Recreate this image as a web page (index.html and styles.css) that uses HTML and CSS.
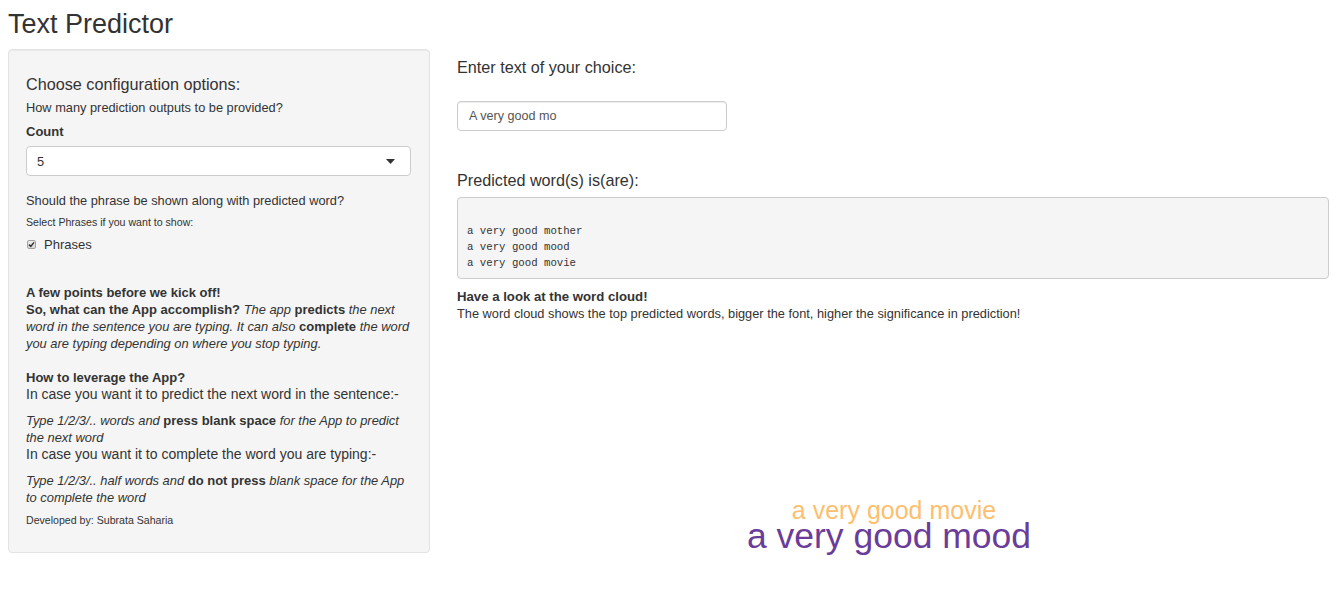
FILE: index.html
```html
<!DOCTYPE html>
<html>
<head>
<meta charset="utf-8">
<title>Text Predictor</title>
<link rel="stylesheet" href="styles.css">
</head>
<body>
<div class="page">
  <h2 class="title">Text Predictor</h2>
  <div class="row">
    <aside class="well">
      <h4 class="cfg-title">Choose configuration options:</h4>
      <p class="hint">How many prediction outputs to be provided?</p>
      <label class="ctrl-label">Count</label>
      <div class="select">
        <span>5</span>
        <svg class="caret" width="9" height="5" viewBox="0 0 9 5"><path d="M0 0 H9 L4.5 5 Z" fill="#333"/></svg>
      </div>
      <p class="question">Should the phrase be shown along with predicted word?</p>
      <p class="small">Select Phrases if you want to show:</p>
      <div class="check-row">
        <span class="checkbox"><svg width="7" height="7" viewBox="0 0 7 7"><path d="M1 3.6 L2.8 5.4 L6 1.4" stroke="#333" stroke-width="1.5" fill="none"/></svg></span>
        <span class="check-label">Phrases</span>
      </div>
      <p class="block first-block"><b>A few points before we kick off!</b><br><b>So, what can the App accomplish?</b> <i>The app</i> <b>predicts</b> <i>the next word in the sentence you are typing. It can also</i> <b>complete</b> <i>the word you are typing depending on where you stop typing.</i></p>
      <p class="block lev"><b>How to leverage the App?</b><br><span class="plain">In case you want it to predict the next word in the sentence:-</span></p>
      <p class="block step"><i>Type 1/2/3/.. words and</i> <b>press blank space</b> <i>for the App to predict the next word</i><br><span class="plain">In case you want it to complete the word you are typing:-</span></p>
      <p class="block step"><i>Type 1/2/3/.. half words and</i> <b>do not press</b> <i>blank space for the App to complete the word</i></p>
      <p class="small dev">Developed by: Subrata Saharia</p>
    </aside>
    <main class="main">
      <h4 class="m-label">Enter text of your choice:</h4>
      <div class="input">A very good mo</div>
      <h4 class="m-label pred">Predicted word(s) is(are):</h4>
      <pre class="out">

a very good mother
a very good mood
a very good movie</pre>
      <p class="cloud-text"><b>Have a look at the word cloud!</b><br>The word cloud shows the top predicted words, bigger the font, higher the significance in prediction!</p>
      <div class="cloud">
        <span class="w-movie">a very good movie</span>
        <span class="w-mood">a very good mood</span>
      </div>
    </main>
  </div>
</div>
</body>
</html>
```

FILE: styles.css
```css
* { box-sizing: border-box; }
html, body { margin: 0; padding: 0; background: #fff; }
body {
  font-family: "Liberation Sans", Arial, sans-serif;
  color: #333;
  font-size: 12.8px;
  line-height: 17px;
}
.page { padding: 0 14px 0 8px; }
.title {
  font-weight: 400;
  font-size: 27px;
  line-height: 30px;
  margin: 9px 0 10px;
  color: #333;
}
.row { display: flex; align-items: flex-start; }
.well {
  width: 422px;
  flex: none;
  background: #f5f5f5;
  border: 1px solid #e3e3e3;
  border-radius: 4px;
  box-shadow: inset 0 1px 1px rgba(0,0,0,0.05);
  padding: 17px 18px 25px 17px;
}
.well p { margin: 0; }
.cfg-title {
  font-weight: 400;
  font-size: 16.2px;
  line-height: 20px;
  margin: 7px 0 5px;
}
.hint { font-size: 12.8px; }
.ctrl-label {
  display: block;
  font-weight: 700;
  font-size: 13px;
  margin-top: 7px;
}
.select {
  margin-top: 6px;
  height: 30px;
  background: #fff;
  border: 1px solid #ccc;
  border-radius: 4px;
  display: flex;
  align-items: center;
  justify-content: space-between;
  padding: 0 15px 0 10px;
}
.caret { display: block; }
.question {
  margin-top: 16px !important;
  font-size: 12.8px;
  line-height: 18px;
}
.small {
  font-size: 10.6px;
  line-height: 14px;
}
.well .small { margin-top: 5px; }
.check-row {
  margin-top: 6px;
  display: flex;
  align-items: center;
  height: 18px;
}
.checkbox {
  width: 9px;
  height: 9px;
  margin-left: 1px;
  border: 1px solid #a0a0a0;
  border-radius: 2px;
  background: linear-gradient(#ececec, #d8d8d8);
  display: flex;
  align-items: center;
  justify-content: center;
}
.checkbox svg { display: block; }
.check-label {
  margin-left: 8px;
  font-size: 13px;
}
.block { font-size: 12.9px; }
.block b { font-size: 13px; }
.block .plain { font-size: 14px; }
.first-block { margin-top: 31px !important; }
.lev { margin-top: 17px !important; }
.step { margin-top: 9px !important; }
.well .dev { margin-top: 7px; }
.main {
  flex: 1;
  margin-left: 27px;
}
.m-label {
  font-weight: 400;
  font-size: 16.2px;
  line-height: 20px;
  margin: 8px 0 0;
}
.input {
  margin-top: 24px;
  width: 270px;
  height: 30px;
  border: 1px solid #ccc;
  border-radius: 4px;
  box-shadow: inset 0 1px 1px rgba(0,0,0,0.075);
  padding: 0 11px;
  display: flex;
  align-items: center;
  font-size: 12.6px;
  color: #555;
}
.m-label.pred { margin-top: 39px; }
.out {
  margin: 7px 0 0;
  height: 82px;
  background: #f5f5f5;
  border: 1px solid #ccc;
  border-radius: 4px;
  padding: 9px 9px 7px;
  font-family: "Liberation Mono", "DejaVu Sans Mono", monospace;
  font-size: 10.7px;
  line-height: 16px;
  color: #333;
  overflow: hidden;
}
.cloud-text {
  margin: 9px 0 0;
  font-size: 12.8px;
}
.cloud-text b { font-size: 13.2px; }
.cloud {
  height: 240px;
  display: flex;
  flex-direction: column;
  align-items: center;
  justify-content: flex-end;
  padding-bottom: 11px;
}
.cloud span { display: block; white-space: nowrap; font-family: "Liberation Sans", Arial, sans-serif; }
.w-movie {
  color: #fdbf6f;
  font-size: 25px;
  line-height: 24px;
  margin-left: 2px;
}
.w-mood {
  color: #6a3d9a;
  font-size: 35.5px;
  line-height: 29px;
  margin-right: 8px;
}
```
